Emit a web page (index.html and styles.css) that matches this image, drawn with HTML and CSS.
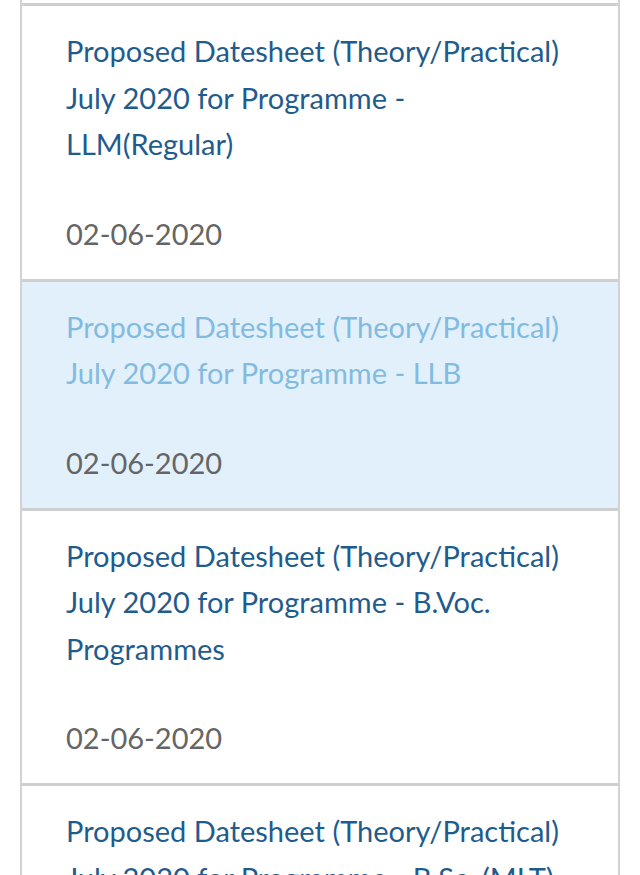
FILE: index.html
```html
<!DOCTYPE html>
<html>
<head>
<meta charset="utf-8">
<link rel="stylesheet" href="styles.css">
</head>
<body>
<ul class="list">
  <li class="item">
    <a class="title">Proposed Datesheet (Theory/Practical) July 2020 for Programme - LLM(Regular)</a>
    <div class="date">02-06-2020</div>
  </li>
  <li class="item active">
    <a class="title">Proposed Datesheet (Theory/Practical) July 2020 for Programme - LLB</a>
    <div class="date">02-06-2020</div>
  </li>
  <li class="item">
    <a class="title">Proposed Datesheet (Theory/Practical) July 2020 for Programme - B.Voc. Programmes</a>
    <div class="date">02-06-2020</div>
  </li>
  <li class="item">
    <a class="title">Proposed Datesheet (Theory/Practical) July 2020 for Programme - B.Sc. (MLT)</a>
    <div class="date">02-06-2020</div>
  </li>
</ul>
</body>
</html>
```
FILE: styles.css
```css
html, body {
  margin: 0;
  padding: 0;
  background: #fff;
}
body {
  font-family: Lato, "Open Sans", sans-serif;
  overflow: hidden;
  height: 875px;
}
.list {
  list-style: none;
  margin: 0 20px;
  padding: 3px 0 0 0;
  border-left: 2px solid #d2d2d2;
  border-right: 2px solid #d2d2d2;
}
.item {
  border-top: 3px solid #cfcfcf;
  padding: 22px 46px 22px 44px;
}
.title {
  display: block;
  font-size: 29px;
  line-height: 46.5px;
  color: #1f5c8e;
  margin-bottom: 43px;
}
.date {
  font-size: 29px;
  line-height: 46px;
  color: #656565;
}
.active {
  background: #e2f0fc;
}
.active .title {
  color: #82bbe0;
}
```
